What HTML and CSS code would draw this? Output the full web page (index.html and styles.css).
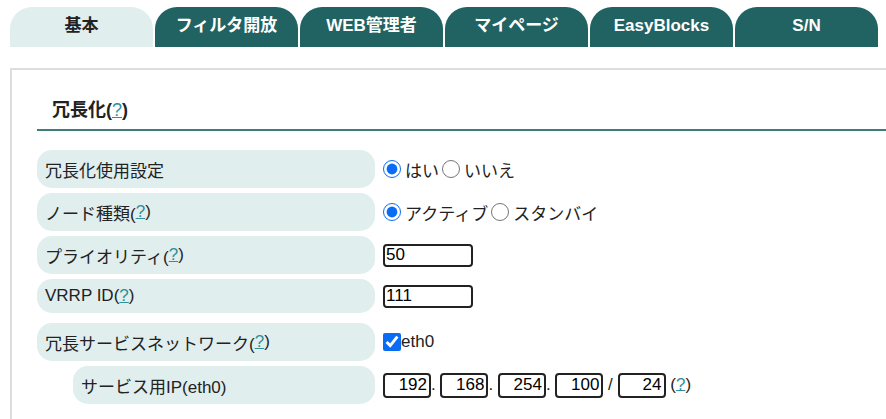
FILE: index.html
```html
<!DOCTYPE html>
<html lang="ja">
<head>
    <meta charset="UTF-8">
    <title>冗長化</title>
    <link rel="stylesheet" href="styles.css">
</head>
<body>
    <div class="tabs">
        <div class="tab active">基本</div>
        <div class="tab">フィルタ開放</div>
        <div class="tab">WEB管理者</div>
        <div class="tab">マイページ</div>
        <div class="tab">EasyBlocks</div>
        <div class="tab">S/N</div>
    </div>

    <div class="panel">
        <h2 class="section-title">冗長化(<a href="#">?</a>)</h2>

        <div class="rows">
            <div class="row">
                <div class="label">冗長化使用設定</div>
                <div class="value">
                    <label><input type="radio" name="use" checked>はい</label>
                    <label><input type="radio" name="use">いいえ</label>
                </div>
            </div>
            <div class="row">
                <div class="label">ノード種類(<a href="#">?</a>)</div>
                <div class="value">
                    <label><input type="radio" name="node" checked>アクティブ</label>
                    <label><input type="radio" name="node">スタンバイ</label>
                </div>
            </div>
            <div class="row">
                <div class="label">プライオリティ(<a href="#">?</a>)</div>
                <div class="value"><input class="num" type="text" value="50"></div>
            </div>
            <div class="row short">
                <div class="label">VRRP ID(<a href="#">?</a>)</div>
                <div class="value"><input class="num" type="text" value="111"></div>
            </div>
            <div class="row">
                <div class="label">冗長サービスネットワーク(<a href="#">?</a>)</div>
                <div class="value"><label class="check"><input type="checkbox" checked>eth0</label></div>
            </div>
            <div class="row sub">
                <div class="label">サービス用IP(eth0)</div>
                <div class="value ip"><input class="oct" type="text" value="192">. <input class="oct" type="text" value="168">. <input class="oct" type="text" value="254">. <input class="oct" type="text" value="100"> / <input class="oct" type="text" value="24"> (<a href="#">?</a>)</div>
            </div>
        </div>
    </div>
</body>
</html>
```

FILE: styles.css
```css
body {
    font-family: "Liberation Sans", "Noto Sans CJK JP", sans-serif;
    font-size: 17px;
    color: #222;
    background: #fff;
    margin: 0;
    padding: 7px 0 0 10px;
    overflow: hidden;
}
a {
    color: #2f8f9a;
    font-weight: normal;
}
.tabs {
    display: flex;
    gap: 2px;
}
.tab {
    width: 143px;
    height: 40px;
    line-height: 37px;
    text-align: center;
    font-weight: bold;
    font-size: 17px;
    color: #fff;
    background: #216363;
    border-radius: 22px 22px 0 0;
}
.tab.active {
    background: #e0eeee;
    color: #222;
}
.panel {
    margin-top: 21px;
    border-top: 2px solid #ddd;
    border-left: 2px solid #ddd;
    padding: 0 0 0 25px;
    height: 349px;
}
.section-title {
    margin: 25px 0 0;
    padding: 0 0 8px 15px;
    font-size: 18px;
    font-weight: bold;
    border-bottom: 2px solid #3f7c7c;
}
.rows {
    margin-top: 19px;
}
.row {
    display: flex;
    align-items: center;
    margin-bottom: 5px;
}
.label {
    width: 330px;
    height: 38px;
    padding-left: 8px;
    display: flex;
    align-items: center;
    background: #e0eeee;
    border-radius: 15px;
}
.row.short {
    margin-bottom: 10px;
}
.row.short .label {
    height: 34px;
}
.row.sub .label {
    margin-left: 36px;
    width: 294px;
}
.value {
    margin-left: 8px;
    display: flex;
    align-items: center;
}
.value label {
    display: flex;
    align-items: center;
    margin-right: 3px;
}
input[type="radio"] {
    width: 18px;
    height: 18px;
    margin: 0 4px 0 0;
    accent-color: #0a6cf5;
}
input[type="checkbox"] {
    width: 18px;
    height: 18px;
    margin: 0;
    accent-color: #0a6cf5;
}
.num {
    width: 90px;
    height: 23px;
    box-sizing: border-box;
    border: 2px solid #222;
    border-radius: 4px;
    font-family: inherit;
    font-size: 17px;
    padding: 0 1px;
}
.ip {
    display: block;
    white-space: nowrap;
}
.oct {
    width: 48px;
    height: 25px;
    box-sizing: border-box;
    border: 2px solid #222;
    border-radius: 4px;
    font-family: inherit;
    font-size: 17px;
    padding: 0 2px;
    text-align: right;
    vertical-align: middle;
}
```
